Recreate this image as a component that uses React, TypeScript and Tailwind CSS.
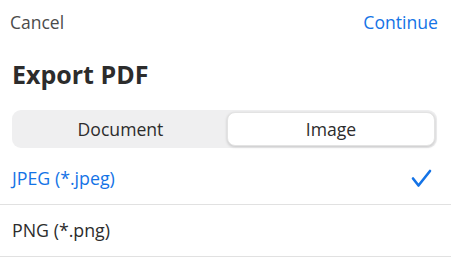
export default function App() {
    const rows = [
        { label: "JPEG (*.jpeg)", selected: true },
        { label: "PNG (*.png)", selected: false },
    ]

    return (
        <div className="w-[451px] h-[258px] bg-white overflow-hidden font-['Open_Sans',sans-serif] text-[#2c2c2c]">
            {/* Top bar */}
            <div className="flex items-center justify-between h-[45px] pl-[10px] pr-[13px]">
                <span className="text-[17.5px] text-[#4b4b4b]">Cancel</span>
                <span className="text-[17.6px] text-[#1473e6]">Continue</span>
            </div>

            {/* Title */}
            <h1 className="px-[12px] pt-[7px] text-[25px] font-bold leading-[44px] text-[#2c2c2c]">Export PDF</h1>

            {/* Segmented control */}
            <div className="ml-[12px] mr-[14px] mt-[14px] h-[38px] rounded-[9px] bg-[#efeff0] p-[2px] flex">
                <button className="flex-1 text-[17.6px] text-[#2c2c2c]">Document</button>
                <button className="w-[208px] rounded-[8px] bg-white text-[17.6px] text-[#2c2c2c] shadow-[0_1px_3px_rgba(0,0,0,0.18)] border border-[#e3e3e3]">Image</button>
            </div>

            {/* Options */}
            <div className="mt-[5px]">
                {rows.map((row) => (
                    <div key={row.label} className="flex items-center justify-between h-[52px] pl-[12px] pr-[19px] border-b border-[#e1e1e1]">
                        <span className={`text-[17.8px] ${row.selected ? "text-[#1473e6]" : "text-[#2c2c2c]"}`}>{row.label}</span>
                        {row.selected && (
                            <svg width="21" height="19" viewBox="0 0 21 19" fill="none" className="mr-[0px]">
                                <path d="M2 9.5 L7.5 16.5 L19 2" stroke="#1473e6" strokeWidth="2.6" strokeLinecap="round" strokeLinejoin="round" />
                            </svg>
                        )}
                    </div>
                ))}
            </div>
        </div>
    )
}
